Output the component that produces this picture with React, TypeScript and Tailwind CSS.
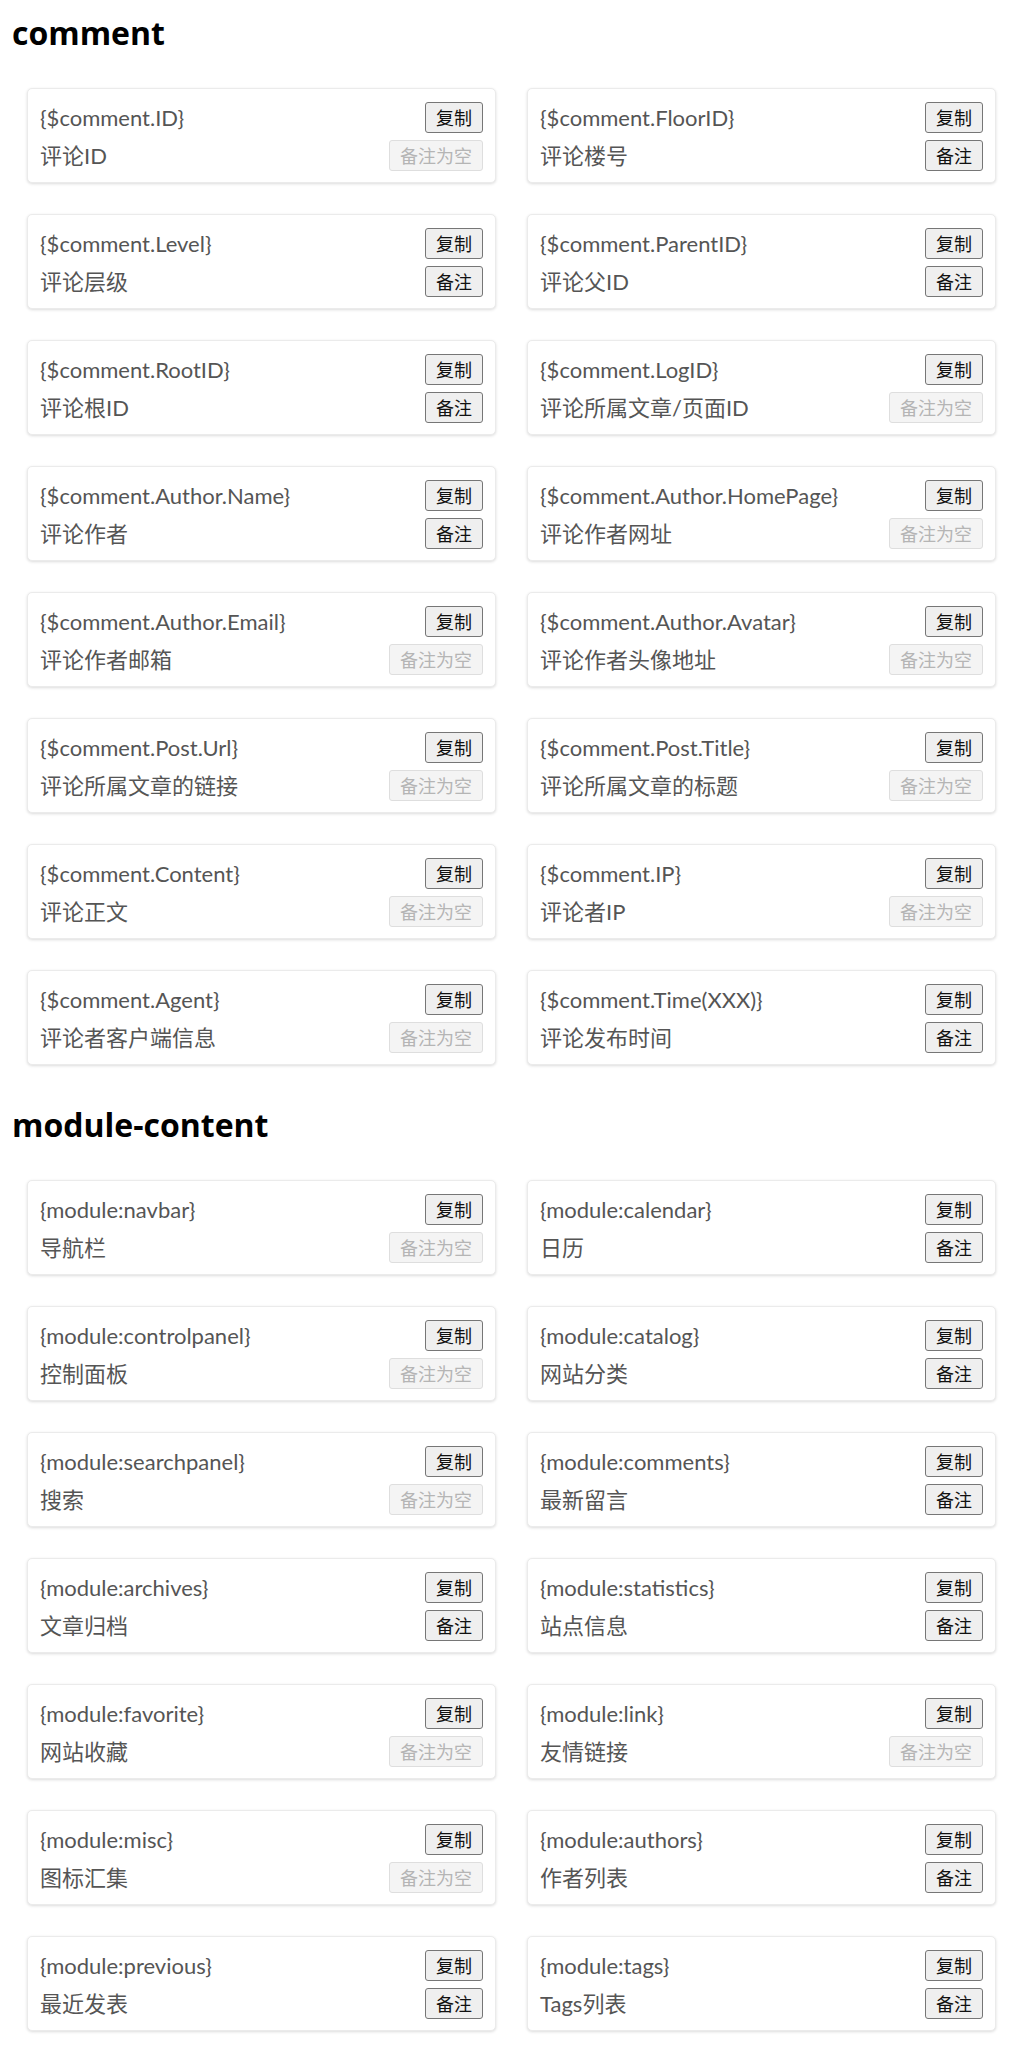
const sections = [
  {
    title: 'comment',
    items: [
      ['{$comment.ID}', '评论ID', false],
      ['{$comment.FloorID}', '评论楼号', true],
      ['{$comment.Level}', '评论层级', true],
      ['{$comment.ParentID}', '评论父ID', true],
      ['{$comment.RootID}', '评论根ID', true],
      ['{$comment.LogID}', '评论所属文章/页面ID', false],
      ['{$comment.Author.Name}', '评论作者', true],
      ['{$comment.Author.HomePage}', '评论作者网址', false],
      ['{$comment.Author.Email}', '评论作者邮箱', false],
      ['{$comment.Author.Avatar}', '评论作者头像地址', false],
      ['{$comment.Post.Url}', '评论所属文章的链接', false],
      ['{$comment.Post.Title}', '评论所属文章的标题', false],
      ['{$comment.Content}', '评论正文', false],
      ['{$comment.IP}', '评论者IP', false],
      ['{$comment.Agent}', '评论者客户端信息', false],
      ['{$comment.Time(XXX)}', '评论发布时间', true],
    ],
  },
  {
    title: 'module-content',
    items: [
      ['{module:navbar}', '导航栏', false],
      ['{module:calendar}', '日历', true],
      ['{module:controlpanel}', '控制面板', false],
      ['{module:catalog}', '网站分类', true],
      ['{module:searchpanel}', '搜索', false],
      ['{module:comments}', '最新留言', true],
      ['{module:archives}', '文章归档', true],
      ['{module:statistics}', '站点信息', true],
      ['{module:favorite}', '网站收藏', false],
      ['{module:link}', '友情链接', false],
      ['{module:misc}', '图标汇集', false],
      ['{module:authors}', '作者列表', true],
      ['{module:previous}', '最近发表', true],
      ['{module:tags}', 'Tags列表', true],
    ],
  },
] as const

const btn = 'h-[31px] px-[10px] rounded-[3px] border text-[18px] leading-none flex items-center'
const label = "text-[22px] text-[#555] font-['Lato','Noto_Sans_CJK_SC',sans-serif]"

function Card({ tag, note, hasNote }: { tag: string; note: string; hasNote: boolean }) {
  return (
    <div className="h-[95px] rounded-[5px] border border-[#ebebeb] bg-white shadow-[0_1px_3px_rgba(0,0,0,0.14)] px-[12px] py-[13px] flex flex-col gap-[7px]">
      <div className="h-[31px] flex items-center justify-between">
        <span className={label}>{tag}</span>
        <button className={btn + ' bg-[#efefef] border-[#767676] text-[#111]'}>复制</button>
      </div>
      <div className="h-[31px] flex items-center justify-between">
        <span className={label}>{note}</span>
        {hasNote ? (
          <button className={btn + ' bg-[#efefef] border-[#767676] text-[#111]'}>备注</button>
        ) : (
          <button disabled className={btn + ' bg-[#f4f4f4] border-[#dedede] text-[#b5b5b5]'}>备注为空</button>
        )}
      </div>
    </div>
  )
}

export default function App() {
  return (
    <div
      className="w-[1024px] bg-white pt-[13px] pb-[25px]"
      style={{ fontFamily: '"Open Sans", "Noto Sans CJK SC", sans-serif' }}
    >
      {sections.map((s, i) => (
        <section key={s.title} className={i > 0 ? 'mt-[40px]' : ''}>
          <h2 className="pl-[12px] h-[40px] text-[32px] leading-[40px] font-bold text-black">{s.title}</h2>
          <div className="mt-[35px] pl-[27px] pr-[28px] grid grid-cols-2 gap-x-[31px] gap-y-[31px]">
            {s.items.map(([tag, note, hasNote]) => (
              <Card key={tag} tag={tag} note={note} hasNote={hasNote} />
            ))}
          </div>
        </section>
      ))}
    </div>
  )
}
